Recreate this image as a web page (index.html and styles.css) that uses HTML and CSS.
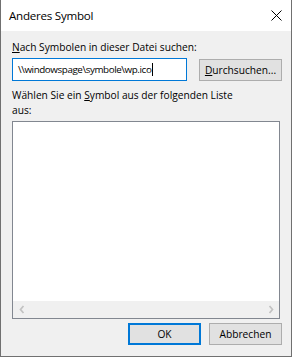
FILE: index.html
```html
<!DOCTYPE html>
<html lang="de">
<head>
<meta charset="utf-8">
<title>Anderes Symbol</title>
<link rel="stylesheet" href="styles.css">
</head>
<body>
<div class="window">
  <div class="titlebar">
    <span class="title">Anderes Symbol</span>
    <svg class="close" width="11" height="11" viewBox="0 0 11 11"><path d="M0.5 0.5 L10.5 10.5 M10.5 0.5 L0.5 10.5" stroke="#000" stroke-width="1" fill="none"/></svg>
  </div>
  <div class="content">
    <div class="label first"><u>N</u>ach Symbolen in dieser Datei suchen:</div>
    <div class="row">
      <div class="input"><span class="value">\\windowspage\symbole\wp.ico</span><span class="caret"></span></div>
      <div class="btn browse"><u>D</u>urchsuchen...</div>
    </div>
    <div class="label second">Wählen Sie ein <u>S</u>ymbol aus der folgenden Liste<br>aus:</div>
    <div class="list">
      <div class="list-area"></div>
      <div class="hscroll">
        <svg class="arrow" width="6" height="9" viewBox="0 0 6 9"><path d="M4.5 1 L1.5 4.5 L4.5 8" stroke="#c2c2c2" stroke-width="1.7" fill="none"/></svg>
        <svg class="arrow" width="6" height="9" viewBox="0 0 6 9"><path d="M1.5 1 L4.5 4.5 L1.5 8" stroke="#c2c2c2" stroke-width="1.7" fill="none"/></svg>
      </div>
    </div>
    <div class="footer">
      <div class="btn ok">OK</div>
      <div class="btn">Abbrechen</div>
    </div>
  </div>
</div>
</body>
</html>
```
FILE: styles.css
```css
* { box-sizing: border-box; }
html, body { margin: 0; padding: 0; }
body {
  width: 292px;
  height: 357px;
  overflow: hidden;
  background: #f0f0f0;
  font-family: "Open Sans", "Noto Sans", sans-serif;
  color: #000;
}
.window {
  width: 292px;
  height: 357px;
  border: 1px solid #707070;
  border-top: none;
  background: #f0f0f0;
  display: flex;
  flex-direction: column;
}
.titlebar {
  height: 31px;
  flex: none;
  background: #fff;
  display: flex;
  align-items: center;
  justify-content: space-between;
  padding: 0 9px 0 8px;
}
.title {
  font-size: 11.6px;
  letter-spacing: -0.25px;
  line-height: 15px;
}
.close { display: block; }
.content {
  flex: 1;
  display: flex;
  flex-direction: column;
  padding: 0 9px 0 11px;
  font-size: 10.2px;
}
.label {
  line-height: 15px;
  white-space: nowrap;
}
.label u, .btn u { text-underline-offset: 1px; }
.label.first { margin-top: 9px; }
.row {
  margin-top: 3px;
  display: flex;
  align-items: flex-end;
  height: 23px;
}
.input {
  width: 175px;
  height: 23px;
  background: #fff;
  border: 1px solid #0078d7;
  display: flex;
  align-items: center;
  padding-left: 5px;
}
.value {
  font-size: 9.8px;
  letter-spacing: -0.4px;
  white-space: nowrap;
}
.caret {
  width: 1px;
  height: 13px;
  background: #000;
  margin-left: 1px;
}
.btn {
  height: 22px;
  background: #e1e1e1;
  border: 1px solid #adadad;
  display: flex;
  align-items: center;
  justify-content: center;
  line-height: 15px;
}
.browse {
  width: 83px;
  margin-left: 12px;
}
.label.second { margin-top: 7px; }
.list {
  margin-top: 3px;
  width: 268px;
  height: 198px;
  border: 1px solid #828790;
  background: #fff;
  display: flex;
  flex-direction: column;
}
.list-area { flex: 1; }
.hscroll {
  height: 17px;
  background: #f0f0f0;
  display: flex;
  align-items: center;
  justify-content: space-between;
  padding: 0 5px 0 6px;
}
.arrow { display: block; }
.footer {
  margin-top: 4px;
  display: flex;
  justify-content: flex-end;
  gap: 8px;
}
.footer .btn { width: 73px; }
.ok { border: 2px solid #0078d7; }
```
